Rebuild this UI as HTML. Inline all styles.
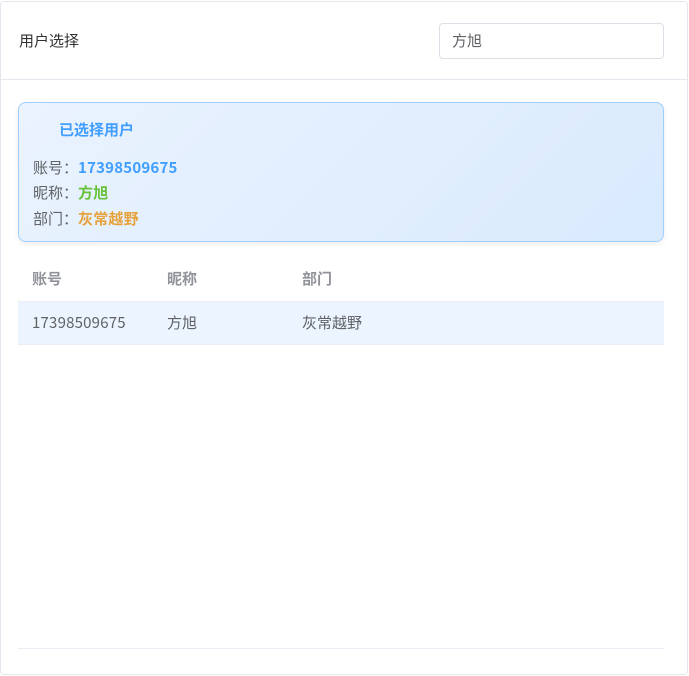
<!DOCTYPE html><html><head><style>
body{margin:0;background:#fff;font-family:"Noto Sans CJK SC",sans-serif;}
.card{position:absolute;left:0;top:1px;width:686px;height:672px;border:1px solid #e4e7ed;border-radius:4px;background:#fff;}
.hd{position:absolute;left:0;top:0;width:686px;height:77px;border-bottom:1px solid #e4e7ed;}
.t{position:absolute;left:18px;top:28px;font-size:15px;line-height:22px;color:#303133;}
.inp{position:absolute;left:438px;top:21px;border:1px solid #dcdfe6;border-radius:4px;font-size:15px;color:#606266;line-height:34px;box-sizing:border-box;padding-left:12px;height:36px;width:225px;}
.sel{position:absolute;left:17px;top:100px;width:644px;height:138px;border:1px solid #a0cfff;border-radius:8px;background:linear-gradient(135deg,#eaf3fe,#d9eafd);box-shadow:0 2px 6px rgba(0,0,0,.08);}
.sel .h{position:absolute;left:40px;top:17px;font-size:15px;line-height:20px;font-weight:bold;color:#409eff;}
.r{position:absolute;left:14px;font-size:15px;line-height:20px;color:#606266;}
.r b{font-weight:bold;letter-spacing:0.2px}
.th{position:absolute;top:256px;left:17px;width:646px;height:43px;border-bottom:1px solid #ebeef5;font-size:15px;font-weight:bold;color:#909399;}
.tr{position:absolute;top:300px;left:17px;width:646px;height:42px;background:#ecf5ff;border-bottom:1px solid #ebeef5;font-size:15px;color:#606266;}
.c{position:absolute;top:11px;line-height:20px}
.bl{position:absolute;left:17px;top:646px;width:646px;border-top:1px solid #ebeef5;}
</style></head><body>
<div class="card">
<div class="hd"><div class="t">用户选择</div><div class="inp">方旭</div></div>
<div class="sel"><div class="h">已选择用户</div>
<div class="r" style="top:55px">账号：<b style="color:#409eff">17398509675</b></div>
<div class="r" style="top:80px">昵称：<b style="color:#67c23a">方旭</b></div>
<div class="r" style="top:106px">部门：<b style="color:#e6a23c">灰常越野</b></div>
</div>
<div class="th"><span class="c" style="left:14px">账号</span><span class="c" style="left:149px">昵称</span><span class="c" style="left:284px">部门</span></div>
<div class="tr"><span class="c" style="left:14px;letter-spacing:0.2px">17398509675</span><span class="c" style="left:149px">方旭</span><span class="c" style="left:284px">灰常越野</span></div>
<div class="bl"></div>
</div>
</body></html>
